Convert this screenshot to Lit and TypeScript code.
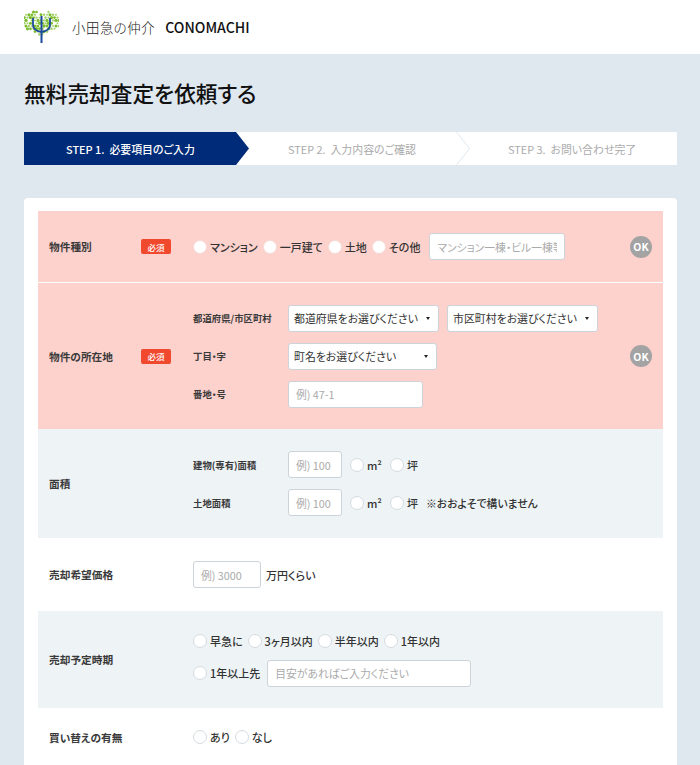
import { LitElement, html, css, svg } from "lit";
import { customElement } from "lit/decorators.js";

function heartDots() {
  const out: { x: number; y: number; r: number; c: string }[] = [];
  let i = 0;
  for (let py = 2; py <= 25; py += 2.8) {
    const row = Math.round((py - 2) / 2.8);
    for (let px = 0.5; px <= 35; px += 3) {
      const qx = px + (row % 2 ? 1.5 : 0);
      const x = (qx - 17.5) / 15.5;
      const y = 1.22 - ((py - 2) / 23) * 2.2;
      const v = Math.pow(x * x + y * y - 1, 3) - x * x * y * y * y;
      i++;
      if (v > 0.05 || i % 7 === 3) continue;
      const r = 0.95 + ((i * 37) % 10) / 12;
      out.push({ x: qx, y: py, r, c: r > 1.3 ? "#7dbd2f" : "#a5d170" });
    }
  }
  return out;
}
const DOTS = heartDots();

@customElement("app-root")
export class AppRoot extends LitElement {
  static styles = css`
    :host {
      display: block;
      height: 765px;
      overflow: hidden;
      background: #dfe7ef;
      font-family: "Noto Sans CJK JP", "Noto Sans", sans-serif;
      font-feature-settings: "palt";
      color: #222;
    }
    * { box-sizing: border-box; }
    header {
      height: 54px;
      background: #fff;
      display: flex;
      align-items: center;
      padding-left: 24px;
    }
    .logo { width: 35px; height: 34px; display: block; }
    .brand-jp { margin-left: 13px; font-size: 13.4px; font-weight: 300; letter-spacing: 0.55px; color: #222; }
    .brand-en { margin-left: 10px; font-size: 14.1px; font-weight: 500; letter-spacing: 0; color: #111; }
    main { padding: 24px 23px 0 24px; }
    h1 { margin: 0 0 24px; font-size: 21.7px; line-height: 30px; font-weight: 500; color: #111; }
    .steps { display: flex; height: 33px; background: #fff; margin-bottom: 33px; font-size: 10.9px; font-weight: 500; color: #aaa; }
    .step { display: flex; align-items: center; white-space: pre; }
    .step.one { flex: 0 0 225px; padding-left: 42px; background: #002b78; color: #fff; clip-path: polygon(0 0, 212px 0, 100% 50%, 212px 100%, 0 100%); }
    .step.two { flex: 0 0 221px; padding-left: 39px; justify-content: space-between; font-weight: 400; }
    .step.three { padding-left: 38px; font-weight: 400; }
    .chev { width: 14px; height: 33px; display: block; }
    .card { background: #fff; border-radius: 4px 4px 0 0; padding: 13px 14px 0; }
    .row { display: flex; align-items: center; padding: 0 11px; }
    .pink { background: #fdd1cc; }
    .gray { background: #eef3f6; }
    .r1 { border-bottom: 1px solid #fff; height: 72px; }
    .r2 { height: 146px; }
    .r3 { height: 109px; }
    .r4 { height: 73px; }
    .r5 { height: 97px; }
    .r6 { height: 58px; }
    .label { width: 92px; flex: none; font-size: 10.7px; font-weight: 700; color: #3a3a3a; }
    .slot { width: 52px; flex: none; }
    .badge { display: flex; align-items: center; justify-content: center; width: 30px; height: 15px; border-radius: 2px; background: #f0492e; color: #fff; font-size: 8.5px; font-weight: 500; }
    .body { flex: 1; min-width: 0; display: flex; flex-direction: column; }
    .line { display: flex; align-items: center; height: 27px; }
    .stack { gap: 11px; }
    .sub { width: 95px; flex: none; font-size: 9.4px; font-weight: 700; color: #3a3a3a; }
    label { display: inline-flex; align-items: center; gap: 3px; margin-right: 5px; font-size: 11px; font-weight: 500; color: #333; white-space: nowrap; }
    input[type="radio"] {
      appearance: none; margin: 0; flex: none;
      width: 14px; height: 14px; border-radius: 50%;
      background: #fff; border: 1px solid #d5dbe0;
    }
    .pink input[type="radio"] { border-color: #f5dcd9; }
    input[type="text"] {
      height: 27px; border: 1px solid #ccd3da; border-radius: 3px; background: #fff;
      padding: 0 7px; font: inherit; font-size: 10.8px; color: #333; outline: none;
    }
    input[type="text"]::placeholder { color: #aaa; opacity: 1; }
    .soft { background: #fdfdfd; }
    .w136 { width: 136px; margin-left: 4px; }
    .w135 { width: 135px; }
    .w54 { width: 54px; margin-right: 8px; }
    .w68 { width: 68px; margin-right: 5px; }
    .w204 { width: 204px; margin-left: 2px; }
    .sel { position: relative; display: block; margin-right: 8px; }
    .sel::after {
      content: ""; position: absolute; right: 9px; top: 12px;
      border-left: 2.5px solid transparent; border-right: 2.5px solid transparent; border-top: 3px solid #222;
    }
    select {
      appearance: none; display: block; height: 27px; width: 100%;
      border: 1px solid #ccd3da; border-radius: 3px; background: #fff;
      padding: 0 5px; font: inherit; font-size: 10.9px; color: #333; outline: none;
    }
    .w151 { width: 151px; }
    .w149 { width: 149px; }
    .ok { flex: none; width: 22px; height: 22px; border-radius: 50%; background: #a3a3a3; color: #fff; font-size: 10.5px; font-weight: 700; display: flex; align-items: center; justify-content: center; }
    .note { font-size: 10.8px; font-weight: 500; color: #333; margin-left: 0; }
    .unit { font-size: 11px; font-weight: 500; color: #333; }
    .r5 .body { gap: 9px; margin-top: -2px; }
    .r5 .top { height: 20px; }
    .r3 label { margin-right: 8px; }
  `;

  private radio(name: string, text: unknown) {
    return html`<label><input type="radio" name=${name} />${text}</label>`;
  }

  private logo() {
    return html`<svg class="logo" viewBox="0 0 35 34" aria-hidden="true">
      ${DOTS.map((d) => svg`<circle cx=${d.x} cy=${d.y} r=${d.r} fill=${d.c}/>`)}
      <path d="M17.5 6V33" stroke="#1b4a9c" stroke-width="2" fill="none"/>
      <path d="M9 8V15C9 19 12 21 17.5 22C23 21 26 19 26 15V8" stroke="#1b4a9c" stroke-width="1.8" fill="none"/>
    </svg>`;
  }

  render() {
    return html`
      <header>
        ${this.logo()}
        <span class="brand-jp">小田急の仲介</span>
        <span class="brand-en">CONOMACHI</span>
      </header>
      <main>
        <h1>無料売却査定を依頼する</h1>
        <div class="steps">
          <div class="step one">STEP 1.  必要項目のご入力</div>
          <div class="step two">
            <span>STEP 2.  入力内容のご確認</span>
            <svg class="chev" viewBox="0 0 14 33"><path d="M0.5 0L13.5 16.5L0.5 33" fill="none" stroke="#dfe7ef"/></svg>
          </div>
          <div class="step three">STEP 3.  お問い合わせ完了</div>
        </div>
        <div class="card">
          <div class="row pink r1">
            <div class="label">物件種別</div>
            <div class="slot"><span class="badge">必須</span></div>
            <div class="body"><div class="line">
              ${this.radio("kind", "マンション")}
              ${this.radio("kind", "一戸建て")}
              ${this.radio("kind", "土地")}
              ${this.radio("kind", "その他")}
              <input type="text" class="w136" placeholder="マンション一棟・ビル一棟等" />
            </div></div>
            <div class="ok">OK</div>
          </div>
          <div class="row pink r2">
            <div class="label">物件の所在地</div>
            <div class="slot"><span class="badge">必須</span></div>
            <div class="body stack">
              <div class="line">
                <span class="sub">都道府県/市区町村</span>
                <span class="sel w151"><select><option>都道府県をお選びください</option></select></span>
                <span class="sel w151"><select><option>市区町村をお選びください</option></select></span>
              </div>
              <div class="line">
                <span class="sub">丁目・字</span>
                <span class="sel w149"><select><option>町名をお選びください</option></select></span>
              </div>
              <div class="line">
                <span class="sub">番地・号</span>
                <input type="text" class="w135 soft" placeholder="例) 47-1" />
              </div>
            </div>
            <div class="ok">OK</div>
          </div>
          <div class="row gray r3">
            <div class="label">面積</div>
            <div class="slot"></div>
            <div class="body stack">
              <div class="line">
                <span class="sub">建物(専有)面積</span>
                <input type="text" class="w54" placeholder="例) 100" />
                ${this.radio("a1", "m²")}
                ${this.radio("a1", "坪")}
              </div>
              <div class="line">
                <span class="sub">土地面積</span>
                <input type="text" class="w54" placeholder="例) 100" />
                ${this.radio("a2", "m²")}
                ${this.radio("a2", "坪")}
                <span class="note">※おおよそで構いません</span>
              </div>
            </div>
          </div>
          <div class="row r4">
            <div class="label">売却希望価格</div>
            <div class="slot"></div>
            <div class="body"><div class="line">
              <input type="text" class="w68" placeholder="例) 3000" />
              <span class="unit">万円くらい</span>
            </div></div>
          </div>
          <div class="row gray r5">
            <div class="label">売却予定時期</div>
            <div class="slot"></div>
            <div class="body">
              <div class="line top">
                ${this.radio("t", "早急に")}
                ${this.radio("t", "3ヶ月以内")}
                ${this.radio("t", "半年以内")}
                ${this.radio("t", "1年以内")}
              </div>
              <div class="line">
                ${this.radio("t", "1年以上先")}
                <input type="text" class="w204" placeholder="目安があればご入力ください" />
              </div>
            </div>
          </div>
          <div class="row r6">
            <div class="label">買い替えの有無</div>
            <div class="slot"></div>
            <div class="body"><div class="line">
              ${this.radio("b", "あり")}
              ${this.radio("b", "なし")}
            </div></div>
          </div>
        </div>
      </main>
    `;
  }
}
